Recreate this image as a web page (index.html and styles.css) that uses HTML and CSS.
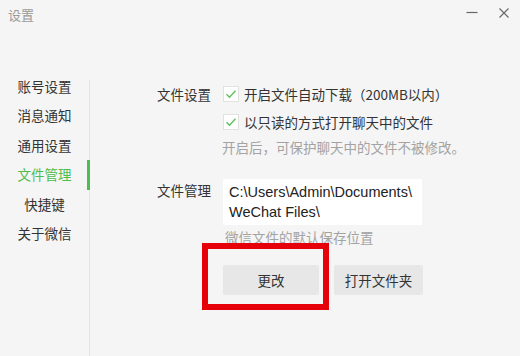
FILE: index.html
```html
<!DOCTYPE html>
<html lang="zh-CN">
<head>
  <meta charset="UTF-8">
  <title>设置</title>
  <link rel="stylesheet" href="styles.css">
</head>
<body>
  <div class="window">
    <div class="titlebar">
      <span class="title">设置</span>
      <div class="win-btns">
        <svg class="win-btn" width="12" height="12" viewBox="0 0 12 12"><path d="M0.5 6.5h11" stroke="#666" stroke-width="1.2"/></svg>
        <svg class="win-btn" width="12" height="12" viewBox="0 0 12 12"><path d="M1.5 2.5l9 9M10.5 2.5l-9 9" stroke="#666" stroke-width="1.1"/></svg>
      </div>
    </div>

    <div class="content">
      <nav class="side">
        <ul class="side-list">
          <li class="side-item">账号设置</li>
          <li class="side-item">消息通知</li>
          <li class="side-item">通用设置</li>
          <li class="side-item active">文件管理</li>
          <li class="side-item">快捷键</li>
          <li class="side-item">关于微信</li>
        </ul>
      </nav>

      <main class="panel">
        <section class="row">
          <div class="label">文件设置</div>
          <div class="field">
            <label class="check">
              <span class="box"><svg width="12" height="10" viewBox="0 0 12 10"><path d="M1.5 5.2l3 3 6-6.5" fill="none" stroke="#5cbf5c" stroke-width="1.3"/></svg></span>
              开启文件自动下载（200MB以内）
            </label>
            <label class="check">
              <span class="box"><svg width="12" height="10" viewBox="0 0 12 10"><path d="M1.5 5.2l3 3 6-6.5" fill="none" stroke="#5cbf5c" stroke-width="1.3"/></svg></span>
              以只读的方式打开聊天中的文件
            </label>
            <p class="hint">开启后，可保护聊天中的文件不被修改。</p>
          </div>
        </section>

        <section class="row row-files">
          <div class="label label-files">文件管理</div>
          <div class="field">
            <div class="path">C:\Users\Admin\Documents\<br>WeChat Files\</div>
            <p class="hint hint-path">微信文件的默认保存位置</p>
            <div class="actions">
              <div class="marked">
                <button class="btn btn-change">更改</button>
                <span class="mark"></span>
              </div>
              <button class="btn btn-open">打开文件夹</button>
            </div>
          </div>
        </section>
      </main>
    </div>
  </div>
</body>
</html>
```

FILE: styles.css
```css
:root {
  --bg: #f5f5f5;
  --text: #333333;
  --muted: #a3a3a3;
  --green: #4dbd4d;
  --line: #e4e4e4;
  --btn: #e7e7e7;
}
*, *::before, *::after { box-sizing: border-box; margin: 0; padding: 0; }
body {
  font-family: "Noto Sans CJK SC", "Noto Sans", sans-serif;
  background: var(--bg);
  color: var(--text);
  font-size: 13.5px;
}
.window {
  width: 520px;
  height: 356px;
  overflow: hidden;
}
.titlebar {
  display: flex;
  justify-content: space-between;
  height: 29px;
  padding: 6px 10px 0 8px;
}
.title {
  color: #9a9a9a;
  font-size: 13px;
  line-height: 18px;
}
.win-btns {
  display: flex;
  gap: 20px;
}
.content {
  display: flex;
  margin-top: 51px;
}
.side {
  width: 90px;
  height: 300px;
  border-right: 1px solid var(--line);
}
.side-list {
  list-style: none;
  margin-top: -8px;
}
.side-item {
  position: relative;
  height: 29.4px;
  line-height: 29.4px;
  text-align: center;
}
.side-item.active { color: var(--green); }
.side-item.active::after {
  content: "";
  position: absolute;
  right: -1px;
  top: 0;
  width: 3px;
  height: 100%;
  background: var(--green);
}
.panel {
  padding-left: 67px;
}
.row {
  display: flex;
}
.label {
  width: 66px;
  line-height: 28px;
}
.check {
  display: flex;
  align-items: center;
  gap: 5px;
  height: 28px;
}
.box {
  display: flex;
  align-items: center;
  justify-content: center;
  width: 16px;
  height: 16px;
  background: #fff;
  border: 1px solid #e2e2e2;
}
.hint {
  color: var(--muted);
  line-height: 22px;
  margin-left: -1px;
}
.row-files {
  margin-top: 21px;
}
.label-files {
  line-height: 20px;
  margin-top: 1px;
}
.path {
  width: 199px;
  background: #fff;
  padding: 3px 6px;
  font-family: "Liberation Sans", Arial, sans-serif;
  font-size: 14.5px;
  line-height: 20px;
  color: #222;
}
.hint-path {
  margin-top: 1px;
  margin-left: 2px;
}
.actions {
  display: flex;
  gap: 15px;
  margin-top: 17px;
}
.marked {
  position: relative;
}
.btn {
  height: 30px;
  border: none;
  background: var(--btn);
  font: inherit;
  color: var(--text);
  border-radius: 2px;
}
.btn-change { width: 96px; }
.btn-open { width: 89px; }
.mark {
  position: absolute;
  inset: -22px -10px -15px -21px;
  border: 6px solid #e5000a;
}
```
